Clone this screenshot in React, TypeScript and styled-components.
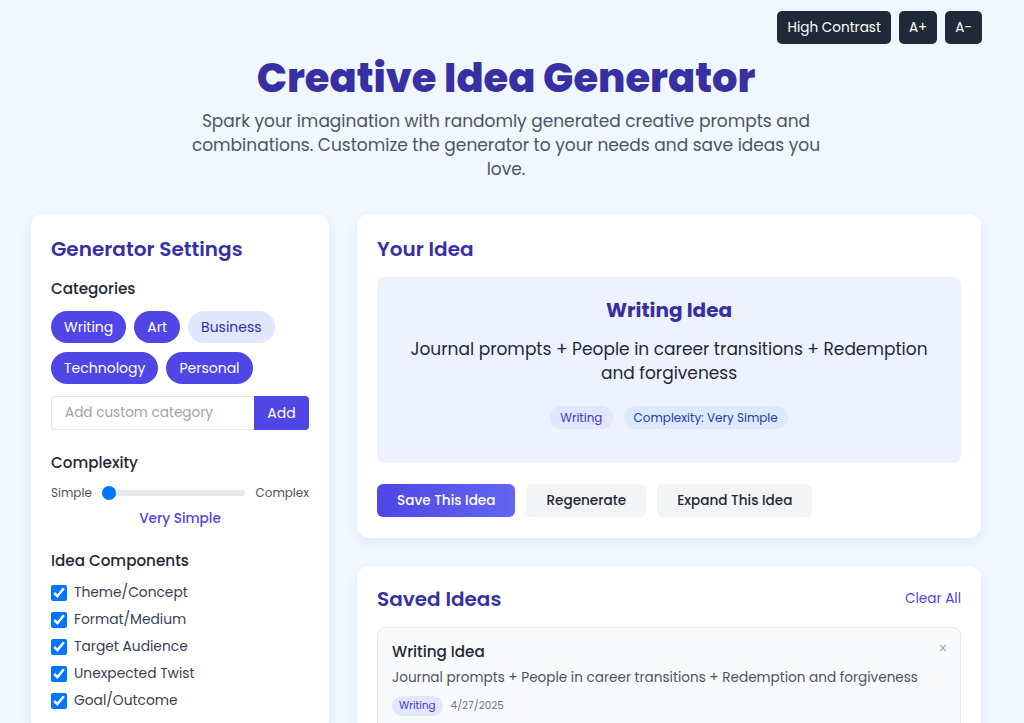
import styled, { createGlobalStyle } from "styled-components";

const GlobalStyle = createGlobalStyle`
  * {
    box-sizing: border-box;
  }

  body {
    margin: 0;
    background: #f0f7ff;
    font-family: "Poppins", "Inter", "Noto Sans", sans-serif;
    color: #1f2937;
  }
`;

const Page = styled.div`
  width: 1024px;
  padding: 11px 43px 40px 31px;
`;

const Toolbar = styled.div`
  display: flex;
  justify-content: flex-end;
  gap: 8px;
  margin-right: -1px;
`;

const ToolButton = styled.button`
  height: 33px;
  padding: 0 10px;
  border: none;
  border-radius: 5px;
  background: #1f2937;
  color: #ffffff;
  font-family: inherit;
  font-size: 13.6px;
  cursor: pointer;
`;

const Header = styled.header`
  text-align: center;
  margin-top: 6px;
`;

const Title = styled.h1`
  margin: 0;
  font-size: 40px;
  line-height: 56px;
  font-weight: 800;
  color: #3730a3;
`;

const Subtitle = styled.p`
  margin: 3px auto 0;
  max-width: 650px;
  font-size: 17px;
  line-height: 24px;
  color: #4b5563;
`;

const Layout = styled.div`
  display: grid;
  grid-template-columns: 298px 624px;
  gap: 28px;
  margin-top: 33px;
  align-items: start;
`;

const Column = styled.div`
  display: flex;
  flex-direction: column;
  gap: 28px;
`;

const Card = styled.section`
  background: #ffffff;
  border-radius: 12px;
  padding: 20px 20px 21px;
  box-shadow: 0 4px 12px rgba(30, 64, 175, 0.08);
`;

const CardTitle = styled.h2`
  margin: 0 0 13px;
  font-size: 20px;
  line-height: 30px;
  font-weight: 600;
  color: #3730a3;
`;

const Section = styled.div<{ $gap?: number }>`
  margin-top: ${(p) => p.$gap ?? 0}px;
`;

const Label = styled.h3`
  margin: 0;
  font-size: 15.2px;
  line-height: 24px;
  font-weight: 500;
  color: #1f2937;
`;

const ChipList = styled.div`
  display: flex;
  flex-wrap: wrap;
  gap: 9px 8px;
  margin-top: 10px;
`;

const Chip = styled.button<{ $active?: boolean }>`
  height: 32px;
  padding: 0 13px;
  border: none;
  border-radius: 16px;
  font-family: inherit;
  font-size: 14px;
  background: ${(p) => (p.$active ? "#4f46e5" : "#e0e7ff")};
  color: ${(p) => (p.$active ? "#ffffff" : "#3730a3")};
`;

const AddRow = styled.div`
  display: flex;
  margin-top: 12px;
  height: 34px;
`;

const AddInput = styled.input`
  flex: 1;
  min-width: 0;
  border: 1px solid #e5e7eb;
  border-right: none;
  border-radius: 4px 0 0 4px;
  padding: 0 13px;
  font-family: inherit;
  font-size: 13.6px;
  color: #1f2937;

  &::placeholder {
    color: #9ca3af;
  }
`;

const AddButton = styled.button`
  width: 55px;
  border: none;
  border-radius: 0 4px 4px 0;
  background: #4f46e5;
  color: #ffffff;
  font-family: inherit;
  font-size: 14px;
`;

const SliderRow = styled.div`
  display: flex;
  align-items: center;
  gap: 10px;
  margin-top: 9px;
  font-size: 12px;
  line-height: 18px;
  color: #4b5563;
`;

const Range = styled.input`
  flex: 1;
  -webkit-appearance: none;
  appearance: none;
  height: 6px;
  margin: 0;
  border-radius: 3px;
  background: #e5e7eb;

  &::-webkit-slider-thumb {
    -webkit-appearance: none;
    width: 14px;
    height: 14px;
    border-radius: 50%;
    background: #0075ff;
  }
`;

const SliderValue = styled.div`
  margin-top: 7px;
  text-align: center;
  font-size: 13.6px;
  line-height: 20px;
  font-weight: 500;
  color: #4f46e5;
`;

const CheckList = styled.div`
  display: flex;
  flex-direction: column;
  gap: 7px;
  margin-top: 10px;
`;

const CheckItem = styled.label`
  display: flex;
  align-items: center;
  gap: 7px;
  height: 20px;
  font-size: 13.8px;
  color: #374151;

  input {
    width: 16px;
    height: 16px;
    margin: 0;
    accent-color: #0075ff;
  }
`;

const IdeaBox = styled.div`
  background: #eef2ff;
  border-radius: 8px;
  padding: 20px 24px 34px;
  text-align: center;
`;

const IdeaTitle = styled.h3`
  margin: 0;
  font-size: 20px;
  line-height: 26px;
  font-weight: 700;
  color: #3730a3;
`;

const IdeaText = styled.p`
  margin: 14px 0 0;
  font-size: 17px;
  line-height: 24px;
  color: #1f2937;
`;

const TagRow = styled.div<{ $center?: boolean }>`
  display: flex;
  align-items: center;
  justify-content: ${(p) => (p.$center ? "center" : "flex-start")};
  gap: 8px;
`;

const Tag = styled.span<{ $tone?: "indigo" | "blue"; $small?: boolean }>`
  display: inline-flex;
  align-items: center;
  height: ${(p) => (p.$small ? 20 : 23)}px;
  padding: 0 ${(p) => (p.$small ? 7 : 10)}px;
  border-radius: 12px;
  font-size: ${(p) => (p.$small ? 10.4 : 12)}px;
  background: ${(p) => (p.$tone === "blue" ? "#dbeafe" : "#e0e7ff")};
  color: ${(p) => (p.$tone === "blue" ? "#1e40af" : "#4338ca")};
`;

const IdeaTags = styled(TagRow)`
  margin-top: 21px;
  gap: 11px;
`;

const Actions = styled.div`
  display: flex;
  gap: 11px;
  margin-top: 21px;
`;

const ActionButton = styled.button<{ $primary?: boolean }>`
  height: 33px;
  padding: 0 20px;
  border: none;
  border-radius: 6px;
  font-family: inherit;
  font-size: 13.6px;
  font-weight: 500;
  background: ${(p) => (p.$primary ? "linear-gradient(90deg, #4f46e5, #6366f1)" : "#f3f4f6")};
  color: ${(p) => (p.$primary ? "#ffffff" : "#1f2937")};
`;

const SavedHeader = styled.div`
  display: flex;
  align-items: center;
  justify-content: space-between;
  margin-top: -2px;
  margin-bottom: 13px;

  h2 {
    margin: 0;
  }
`;

const LinkButton = styled.button`
  border: none;
  background: none;
  padding: 0;
  font-family: inherit;
  font-size: 13.6px;
  color: #4f46e5;
`;

const SavedItem = styled.div`
  position: relative;
  background: #f9fafb;
  border: 1px solid #e5e7eb;
  border-radius: 8px;
  padding: 12px 14px 14px;
`;

const SavedTitle = styled.h4`
  margin: 0;
  font-size: 15.2px;
  line-height: 24px;
  font-weight: 500;
  color: #1f2937;
`;

const SavedText = styled.p`
  margin: 3px 0 0;
  font-size: 13.6px;
  line-height: 22px;
  color: #4b5563;
`;

const SavedMeta = styled(TagRow)`
  margin-top: 7px;
  font-size: 10.4px;
  color: #6b7280;
`;

const CloseButton = styled.button`
  position: absolute;
  top: 12px;
  right: 13px;
  border: none;
  background: none;
  padding: 0;
  font-size: 14px;
  color: #9ca3af;
`;

const categories = [
  { name: "Writing", active: true },
  { name: "Art", active: true },
  { name: "Business", active: false },
  { name: "Technology", active: true },
  { name: "Personal", active: true },
];

const components = ["Theme/Concept", "Format/Medium", "Target Audience", "Unexpected Twist", "Goal/Outcome"];

const ideaText = "Journal prompts + People in career transitions + Redemption and forgiveness";

export default function App() {
  return (
    <>
      <GlobalStyle />
      <Page>
        <Toolbar>
          <ToolButton>High Contrast</ToolButton>
          <ToolButton>A+</ToolButton>
          <ToolButton>A-</ToolButton>
        </Toolbar>

        <Header>
          <Title>Creative Idea Generator</Title>
          <Subtitle>
            Spark your imagination with randomly generated creative prompts and combinations. Customize the generator to
            your needs and save ideas you love.
          </Subtitle>
        </Header>

        <Layout>
          <Card>
            <CardTitle>Generator Settings</CardTitle>

            <Label>Categories</Label>
            <ChipList>
              {categories.map((c) => (
                <Chip key={c.name} $active={c.active}>
                  {c.name}
                </Chip>
              ))}
            </ChipList>
            <AddRow>
              <AddInput placeholder="Add custom category" />
              <AddButton>Add</AddButton>
            </AddRow>

            <Section $gap={21}>
              <Label>Complexity</Label>
              <SliderRow>
                <span>Simple</span>
                <Range type="range" min={1} max={5} defaultValue={1} />
                <span>Complex</span>
              </SliderRow>
              <SliderValue>Very Simple</SliderValue>
            </Section>

            <Section $gap={20}>
              <Label>Idea Components</Label>
              <CheckList>
                {components.map((name) => (
                  <CheckItem key={name}>
                    <input type="checkbox" defaultChecked />
                    {name}
                  </CheckItem>
                ))}
              </CheckList>
            </Section>
          </Card>

          <Column>
            <Card>
              <CardTitle>Your Idea</CardTitle>
              <IdeaBox>
                <IdeaTitle>Writing Idea</IdeaTitle>
                <IdeaText>{ideaText}</IdeaText>
                <IdeaTags $center>
                  <Tag>Writing</Tag>
                  <Tag $tone="blue">Complexity: Very Simple</Tag>
                </IdeaTags>
              </IdeaBox>
              <Actions>
                <ActionButton $primary>Save This Idea</ActionButton>
                <ActionButton>Regenerate</ActionButton>
                <ActionButton>Expand This Idea</ActionButton>
              </Actions>
            </Card>

            <Card>
              <SavedHeader>
                <CardTitle>Saved Ideas</CardTitle>
                <LinkButton>Clear All</LinkButton>
              </SavedHeader>
              <SavedItem>
                <CloseButton>×</CloseButton>
                <SavedTitle>Writing Idea</SavedTitle>
                <SavedText>{ideaText}</SavedText>
                <SavedMeta>
                  <Tag $small>Writing</Tag>
                  <span>4/27/2025</span>
                </SavedMeta>
              </SavedItem>
            </Card>
          </Column>
        </Layout>
      </Page>
    </>
  );
}
